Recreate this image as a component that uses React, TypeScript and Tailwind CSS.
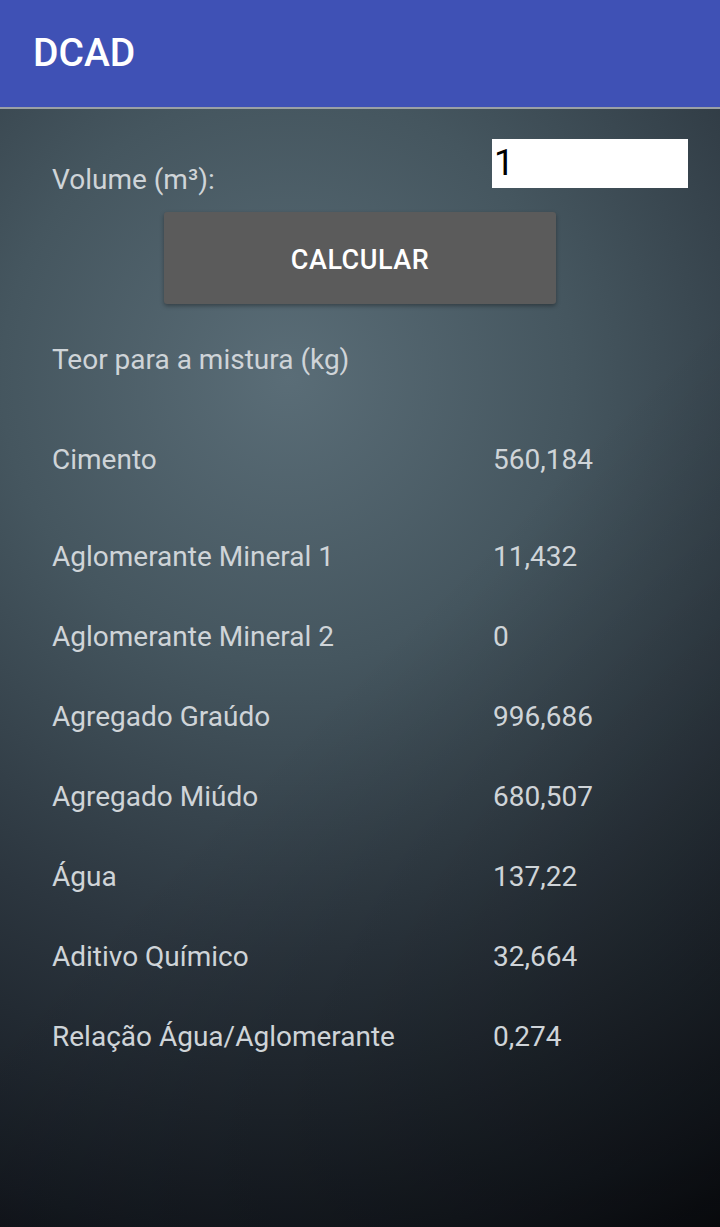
const rows: { label: string; value: string }[] = [
  { label: "Aglomerante Mineral 1", value: "11,432" },
  { label: "Aglomerante Mineral 2", value: "0" },
  { label: "Agregado Graúdo", value: "996,686" },
  { label: "Agregado Miúdo", value: "680,507" },
  { label: "Água", value: "137,22" },
  { label: "Aditivo Químico", value: "32,664" },
  { label: "Relação Água/Aglomerante", value: "0,274" },
];

const Row = ({ label, value }: { label: string; value: string }) => (
  <div className="flex leading-[40px]">
    <span className="w-[441px]">{label}</span>
    <span>{value}</span>
  </div>
);

export default function App() {
  return (
    <div className="flex flex-col w-[720px] h-[1227px] overflow-hidden font-['Roboto',sans-serif]">
      <header className="flex items-center h-[107px] shrink-0 pl-[33px] bg-[#3f51b5]">
        <h1 className="text-[39px] font-medium text-white">DCAD</h1>
      </header>
      <div className="h-[2px] shrink-0 bg-[#9aa0a5]" />

      <main className="relative flex-1 bg-[radial-gradient(circle_at_40%_24%,#5a6d77_0%,#45565f_30%,#2c363f_60%,#151a21_90%,#0c0e13_100%)] text-[28px] text-[#cfd4d8]">
        <div className="absolute inset-0 bg-[linear-gradient(135deg,rgba(0,0,0,0)_50%,rgba(0,0,0,0.35)_100%)]" />
        <div className="relative flex flex-col pl-[52px]">
          <div className="flex items-start mt-[30px]">
            <label className="w-[440px] mt-[21px] leading-[40px]">Volume (m³):</label>
            <div className="w-[196px] h-[49px] bg-white pl-[2px] text-[36px] leading-[49px] text-black">1</div>
          </div>

          <button className="ml-[112px] mt-[12px] w-[392px] h-[92px] pt-[4px] rounded-[3px] bg-[#5b5b5b] text-white font-medium text-[27px] tracking-[0.5px] shadow-[0_2px_4px_rgba(0,0,0,0.35)]">
            CALCULAR
          </button>

          <p className="mt-[36px] leading-[40px]">Teor para a mistura (kg)</p>

          <div className="mt-[60px]">
            <Row label="Cimento" value="560,184" />
          </div>

          <div className="flex flex-col gap-[40px] mt-[57px]">
            {rows.map((r, i) => (
              <Row key={i} label={r.label} value={r.value} />
            ))}
          </div>
        </div>
      </main>
    </div>
  );
}
